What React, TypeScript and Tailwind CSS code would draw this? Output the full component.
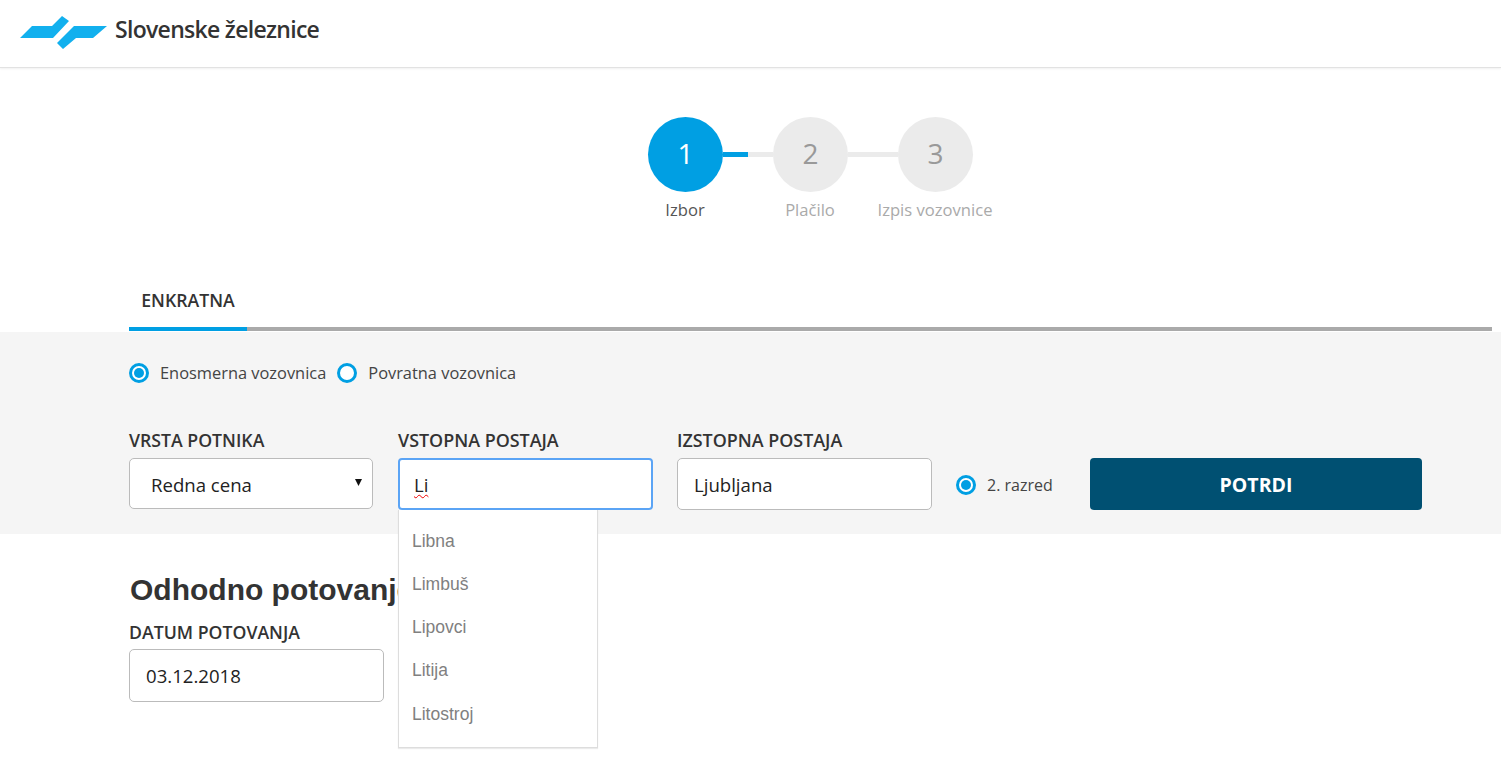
import React from "react";

const sans = "font-['Open_Sans','Noto_Sans',sans-serif]";

const stations = ["Libna", "Limbuš", "Lipovci", "Litija", "Litostroj"];

const Radio = ({ checked, label, small }: { checked: boolean; label: string; small?: boolean }) => (
  <div className="flex items-center">
    <span className="flex h-5 w-5 items-center justify-center rounded-full border-[3px] border-[#009fe3] bg-white">
      {checked && <span className="h-2.5 w-2.5 rounded-full bg-[#009fe3]" />}
    </span>
    <span className={small ? "ml-[11px] text-[16px] text-[#444]" : "ml-[11px] text-[16.4px] text-[#444]"}>{label}</span>
  </div>
);

const Step = ({ n, label, active }: { n: number; label: string; active?: boolean }) => (
  <div className="flex w-[75px] flex-col items-center">
    <div
      className={
        active
          ? "flex h-[75px] w-[75px] items-center justify-center rounded-full bg-[#009fe3] pb-[3px] pl-px text-[28px] text-white"
          : "flex h-[75px] w-[75px] items-center justify-center rounded-full bg-[#ebebeb] pb-[3px] pl-px text-[28px] text-[#999]"
      }
    >
      {n}
    </div>
    <div
      className={
        active
          ? "mt-[6px] whitespace-nowrap text-[16.6px] text-[#555]"
          : "mt-[6px] whitespace-nowrap text-[16.6px] text-[#aaa]"
      }
    >
      {label}
    </div>
  </div>
);

const App = () => {
  return (
    <div className={`h-[757px] overflow-hidden bg-white ${sans}`}>
      {/* Header */}
      <header className="flex h-[68px] items-start border-b border-[#e2e2e2] shadow-[0_1px_2px_rgba(0,0,0,0.06)]">
        <svg width="110" height="52" viewBox="0 0 110 52" className="shrink-0">
          <path d="M20 38 L32 26 L52 26 L62 16 L69 21 L53 38 Z" fill="#12b0ee" />
          <path d="M107 26 L93 38 L76 38 L63 49 L57 43 L74 26 Z" fill="#12b0ee" />
        </svg>
        <div className="mt-[12px] ml-[5px] text-[23px] font-semibold tracking-[-0.7px] text-[#333]">Slovenske železnice</div>
      </header>

      {/* Steps */}
      <div className="mt-[49px] flex h-[116px] justify-center pl-[120px]">
        <div className="ml-[-1px] flex">
          <Step n={1} label="Izbor" active />
          <div className="mt-[35px] flex h-[5px] w-[50px]">
            <div className="h-[5px] w-[25px] bg-[#009fe3]" />
            <div className="h-[5px] w-[25px] bg-[#ebebeb]" />
          </div>
          <Step n={2} label="Plačilo" />
          <div className="mt-[35px] h-[5px] w-[50px] bg-[#ebebeb]" />
          <Step n={3} label="Izpis vozovnice" />
        </div>
      </div>

      {/* Tabs */}
      <div className="mt-[51px] ml-[129px] mr-[9px] flex h-[47px] border-b-4 border-[#aaa]">
        <div className="mb-[-4px] flex h-[47px] w-[118px] items-start justify-center border-b-4 border-[#009fe3] pt-[3px] text-[17.7px] font-semibold text-[#333]">
          ENKRATNA
        </div>
      </div>

      {/* Search form */}
      <section className="mt-px h-[202px] bg-[#f5f5f5] pl-[129px] pt-[30px]">
        <div className="flex h-[22px] items-center gap-[11px]">
          <Radio checked label="Enosmerna vozovnica" />
          <Radio checked={false} label="Povratna vozovnica" />
        </div>

        <div className="mt-[44px] flex items-start">
          <div className="w-[244px]">
            <div className="h-[30px] text-[17.7px] leading-[24px] font-semibold text-[#333]">VRSTA POTNIKA</div>
            <div className="relative flex h-[51px] items-center rounded-[5px] border border-[#bbb] bg-white pt-[2px] pl-[21px] text-[18.6px] text-[#222]">
              Redna cena
              <svg width="8" height="7" viewBox="0 0 8 7" className="absolute top-[20px] right-[9px]">
                <path d="M0 0 H7 L3.5 7 Z" fill="#111" />
              </svg>
            </div>
          </div>

          <div className="relative ml-[25px] w-[255px]">
            <div className="h-[30px] text-[17.9px] leading-[24px] font-semibold text-[#333]">VSTOPNA POSTAJA</div>
            <div className="flex h-[52px] items-center rounded-[4px] border-2 border-[#5ba4f5] bg-white pt-[2px] pl-[14px] text-[18.6px] text-[#222]">
              <span className="underline decoration-[#e00] decoration-wavy decoration-1 underline-offset-2">Li</span>
            </div>
            {/* Autocomplete list */}
            <ul className="absolute top-[82px] left-0 z-10 h-[238px] w-[200px] border border-t-0 border-[#ddd] bg-white pt-[9px] font-['Liberation_Sans',sans-serif] text-[17.5px] text-[#808080] shadow-[0_1px_1px_rgba(0,0,0,0.08)]">
              {stations.map((s) => (
                <li key={s} className="flex h-[43.3px] items-center pl-[13px]">
                  {s}
                </li>
              ))}
            </ul>
          </div>

          <div className="ml-[24px] w-[255px]">
            <div className="h-[30px] text-[17.9px] leading-[24px] font-semibold text-[#333]">IZSTOPNA POSTAJA</div>
            <div className="flex h-[52px] items-center rounded-[5px] border border-[#bbb] bg-white pt-[2px] pl-[16px] text-[18.6px] text-[#222]">
              Ljubljana
            </div>
          </div>

          <div className="mt-[30px] ml-[24px] flex h-[52px] w-[134px] items-center pt-[2px]">
            <Radio checked small label="2. razred" />
          </div>

          <button className="mt-[30px] h-[52px] w-[332px] rounded-[4px] bg-[#005072] pt-[2px] text-[19.5px] font-bold text-white">
            POTRDI
          </button>
        </div>
      </section>

      {/* Outbound journey */}
      <section className="pl-[129px] pt-[36px]">
        <h2 className="ml-px font-['Liberation_Sans',sans-serif] text-[30px] leading-[40px] font-bold text-[#333]">Odhodno potovanje</h2>
        <div className="mt-[10px] h-[29px] text-[17.7px] leading-[24px] font-semibold text-[#333]">DATUM POTOVANJA</div>
        <div className="flex h-[53px] w-[255px] items-center rounded-[5px] border border-[#bbb] bg-white pl-[16px] text-[18.6px] text-[#222]">
          03.12.2018
        </div>
      </section>
    </div>
  );
};

export default App;
